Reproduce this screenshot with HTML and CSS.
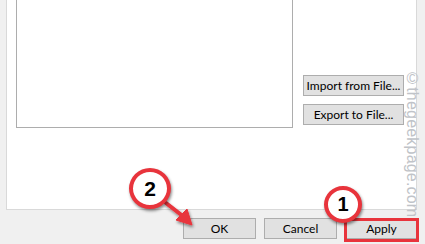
FILE: index.html
```html
<!DOCTYPE html>
<html>
<head>
<meta charset="utf-8">
<link rel="stylesheet" href="styles.css">
</head>
<body>
<div class="dialog">
  <div class="panel">
    <div class="listbox"></div>
    <div class="side">
      <button class="btn side-btn">Import from File...</button>
      <button class="btn side-btn">Export to File...</button>
    </div>
  </div>
  <div class="footer">
    <button class="btn foot-btn">OK</button>
    <button class="btn foot-btn">Cancel</button>
    <button class="btn foot-btn">Apply</button>
  </div>
  <div class="watermark">©thegeekpage.com</div>
  <svg class="arrows" width="425" height="244" viewBox="0 0 425 244">
    <defs>
      <filter id="sh" x="-30%" y="-30%" width="160%" height="160%">
        <feDropShadow dx="1" dy="2" stdDeviation="1.5" flood-color="#000" flood-opacity="0.45"/>
      </filter>
    </defs>
    <g filter="url(#sh)" fill="#e8343c" stroke="#e8343c">
      <line x1="166" y1="203" x2="184" y2="217" stroke-width="4" stroke-linecap="round"/>
      <polygon points="192,225 176,220 187,209" stroke-width="1" stroke-linejoin="round"/>
    </g>
  </svg>
  <div class="highlight"></div>
  <div class="badge badge-2">2</div>
  <div class="badge badge-1">1</div>
</div>
</body>
</html>
```
FILE: styles.css
```css
html, body {
  margin: 0;
  padding: 0;
}
body {
  width: 425px;
  height: 244px;
  overflow: hidden;
  background: #f0f0f0;
  font-family: "Noto Sans", "Open Sans", "DejaVu Sans", sans-serif;
}
.dialog {
  position: relative;
  display: flow-root;
  width: 425px;
  height: 244px;
}
.panel {
  margin-left: 6px;
  margin-top: -20px;
  width: 409px;
  height: 228px;
  background: #fff;
  border: 1px solid #d9d9d9;
  display: flex;
  align-items: flex-start;
}
.listbox {
  margin-left: 9px;
  margin-top: 8px;
  width: 275px;
  height: 137px;
  border: 1px solid #adadad;
  background: #fff;
}
.side {
  margin-left: 10px;
  margin-top: 94px;
  display: flex;
  flex-direction: column;
  gap: 8px;
}
.btn {
  font-family: Lato, "Noto Sans", "DejaVu Sans", sans-serif;
  font-size: 12px;
  color: #000;
  background: #e1e1e1;
  border: 1px solid #adadad;
  padding: 0;
  margin: 0;
  height: 21px;
  line-height: 19px;
  white-space: nowrap;
}
.side-btn {
  width: 101px;
}
.footer {
  display: flex;
  justify-content: flex-end;
  gap: 8px;
  padding-right: 7px;
  margin-top: 8px;
}
.foot-btn {
  width: 73px;
}
.watermark {
  position: absolute;
  right: 4px;
  top: 70px;
  writing-mode: vertical-rl;
  font-family: "Liberation Sans", Arial, sans-serif;
  font-size: 16px;
  color: #c0c3c8;
  letter-spacing: 0.2px;
}
.arrows {
  position: absolute;
  left: 0;
  top: 0;
}
.highlight {
  position: absolute;
  left: 344px;
  top: 218px;
  width: 69px;
  height: 18px;
  border: 3px solid #e8343c;
}
.badge {
  position: absolute;
  box-sizing: border-box;
  border-radius: 50%;
  background: #fff;
  border: 4px solid #e8343c;
  box-shadow: 1px 2px 3px rgba(0,0,0,0.45);
  font-family: "Liberation Sans", Arial, sans-serif;
  font-weight: bold;
  color: #000;
  display: flex;
  align-items: center;
  justify-content: center;
}
.badge-2 {
  left: 129px;
  top: 168px;
  width: 42px;
  height: 41px;
  font-size: 21px;
}
.badge-1 {
  left: 324px;
  top: 186px;
  width: 38px;
  height: 37px;
  font-size: 20px;
}
```
